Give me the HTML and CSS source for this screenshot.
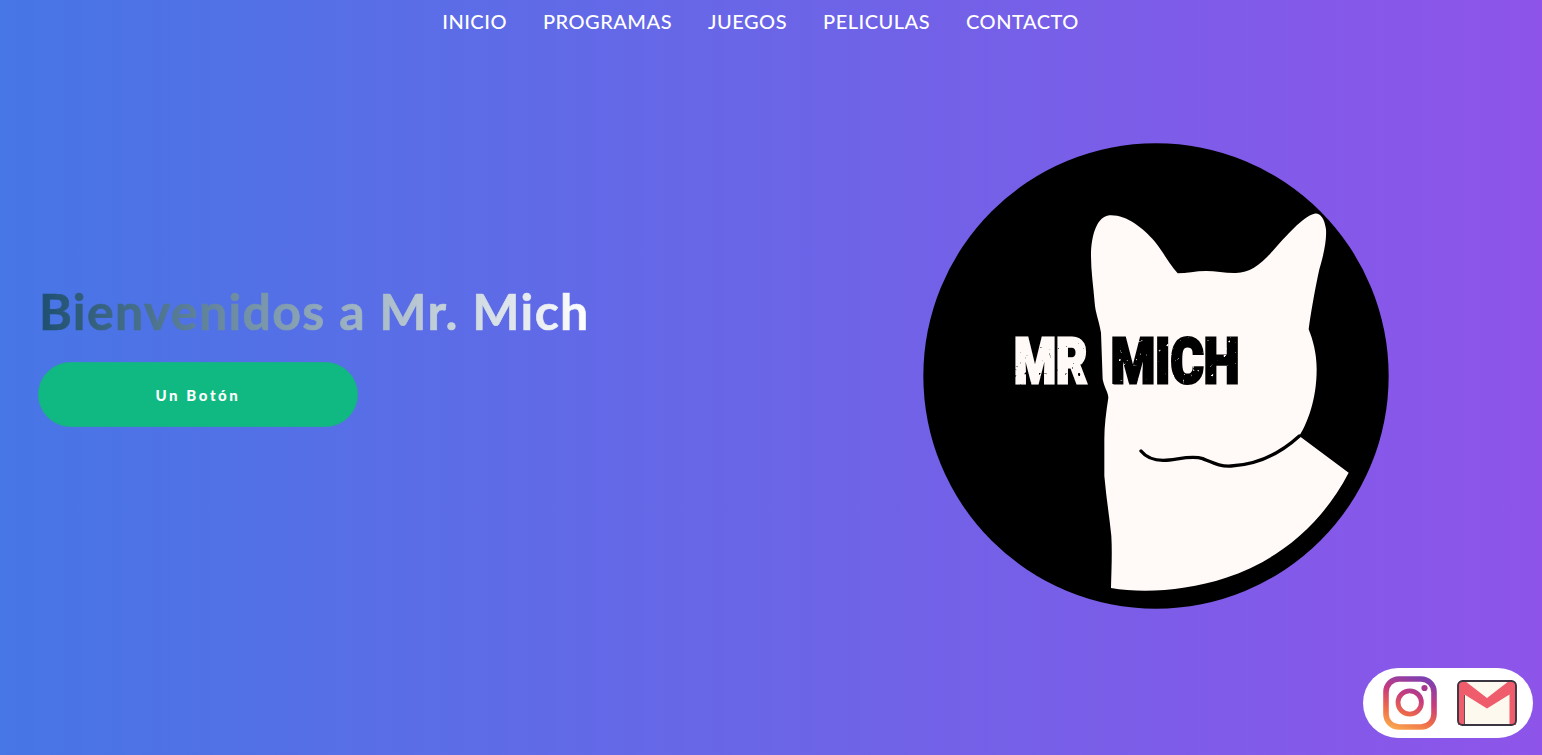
FILE: index.html
```html
<!DOCTYPE html>
<html lang="es">
<head>
<meta charset="utf-8">
<title>Mr. Mich</title>
<link rel="stylesheet" href="styles.css">
</head>
<body>
<nav class="nav">
  <a href="#">INICIO</a>
  <a href="#">PROGRAMAS</a>
  <a href="#">JUEGOS</a>
  <a href="#">PELICULAS</a>
  <a href="#">CONTACTO</a>
</nav>
<main class="hero">
  <div class="intro">
    <h1 class="title">Bienvenidos a Mr. Mich</h1>
    <a class="cta" href="#">Un Botón</a>
  </div>
  <svg class="logo" viewBox="41 41 1398 1398" aria-label="Mr Mich">
    <defs>
      <filter id="soft" x="-2%" y="-2%" width="104%" height="104%">
        <feGaussianBlur stdDeviation="1.8"/>
      </filter>
      <filter id="rough" x="-5%" y="-5%" width="110%" height="110%">
        <feTurbulence type="fractalNoise" baseFrequency="0.07" numOctaves="2" seed="4" result="n"/>
        <feColorMatrix in="n" type="matrix" values="0 0 0 0 0  0 0 0 0 0  0 0 0 0 0  12 0 0 0 -2.200" result="m"/>
        <feComposite in="SourceGraphic" in2="m" operator="in"/>
      </filter>
    </defs>
    <g filter="url(#soft)">
      <circle cx="740" cy="740" r="698" fill="#000"/>
      <path fill="#FFF9F7" d="M600 258C565 262 548 310 545 370C544 420 552 470 556 520C558 550 568 570 575 610L580 750C585 775 597 790 597 805C590 850 585 890 585 930L585 1040C590 1100 600 1160 606 1220C609 1270 606 1330 605 1376C700 1392 830 1385 950 1345C1090 1300 1230 1200 1318 1030L1170 920C1195 880 1222 810 1222 720C1222 670 1210 630 1198 600C1205 550 1215 490 1230 420C1245 370 1252 330 1250 300C1245 265 1232 250 1215 253C1180 262 1130 320 1090 365C1050 410 1020 430 980 431C950 432 920 425 890 425C860 425 830 432 805 432C780 405 760 365 735 335C700 295 650 255 600 258Z"/>
      <path fill="none" stroke="#000" stroke-width="10" stroke-linecap="round" d="M695 965C715 990 745 996 780 992C815 988 850 978 880 988C915 1002 935 1012 965 1010C1040 1006 1110 975 1170 920"/>
      <g filter="url(#rough)">
        <text class="logo-text" x="314" y="762" fill="#FFF9F7" stroke="#FFF9F7" textLength="220" lengthAdjust="spacingAndGlyphs">MR</text>
        <text class="logo-text" x="604" y="762" fill="#000" stroke="#000" textLength="386" lengthAdjust="spacingAndGlyphs">MICH</text>
      </g>
    </g>
  </svg>
</main>
<aside class="social">
  <svg class="ig" viewBox="0 0 54 54" aria-label="Instagram">
    <defs>
      <linearGradient id="igg" gradientUnits="userSpaceOnUse" x1="14" y1="54" x2="34" y2="0">
        <stop offset="0" stop-color="#F9A84F"/>
        <stop offset="0.3" stop-color="#EE6A48"/>
        <stop offset="0.62" stop-color="#C73B7E"/>
        <stop offset="1" stop-color="#7F3FB0"/>
      </linearGradient>
    </defs>
    <rect x="3" y="3" width="48" height="48" rx="13" fill="#fff" stroke="url(#igg)" stroke-width="5.600"/>
    <circle cx="26.700" cy="26.500" r="11.700" fill="#fff" stroke="url(#igg)" stroke-width="4.800"/>
    <circle cx="41.500" cy="12" r="3.100" fill="#A8388F"/>
  </svg>
  <svg class="gm" viewBox="0 0 60 46" aria-label="Correo">
    <rect x="1" y="1" width="58" height="44" rx="4.500" fill="#FEF9EE"/>
    <path fill="#EF5D6C" d="M1 5Q1 1 5 1H8L30 18L52 1H55Q59 1 59 5V45H52.500V14.500L30 28.500L7.500 14.500V45H1Z"/>
    <path fill="none" stroke="#3A3540" stroke-width="0.800" d="M7.500 15V44"/>
    <rect x="1" y="1" width="58" height="44" rx="4.500" fill="none" stroke="#3A3540" stroke-width="1.900"/>
  </svg>
</aside>
</body>
</html>
```
FILE: styles.css
```css
* { box-sizing: border-box; }
html, body { margin: 0; height: 100%; }
body {
  height: 755px;
  overflow: hidden;
  background: linear-gradient(to right, #4776E6, #8E54E9);
  font-family: "Lato", "Liberation Sans", sans-serif;
  color: #fff;
}
.nav {
  height: 44px;
  padding: 0 21px 2px 0;
  display: flex;
  justify-content: center;
  align-items: center;
  gap: 36px;
}
.nav a {
  color: #fff;
  text-decoration: none;
  font-size: 20px;
  font-weight: 500;
  letter-spacing: 0.5px;
  line-height: 42px;
}
.hero {
  height: 664px;
  padding: 0 153px 0 38px;
  display: flex;
  justify-content: space-between;
  align-items: center;
}
.intro {
  display: flex;
  flex-direction: column;
  align-items: flex-start;
  margin-bottom: 44px;
}
.title {
  margin: 0 0 21px 1px;
  font-size: 50px;
  line-height: 60px;
  font-weight: 700;
  letter-spacing: 1.35px;
  -webkit-text-stroke: 0.7px transparent;
  background: linear-gradient(to right, #1E4F70, #FFFFFF);
  -webkit-background-clip: text;
  background-clip: text;
  color: transparent;
}
.cta {
  width: 320px;
  height: 65px;
  display: flex;
  align-items: center;
  justify-content: center;
  border: 1px solid #1CAE8A;
  border-radius: 33px;
  background: #10B981;
  color: #fff;
  font-size: 15px;
  font-weight: 900;
  letter-spacing: 2.6px;
  text-decoration: none;
}
.logo { width: 466px; height: 466px; display: block; }
.logo-text {
  font-family: "Roboto", "Liberation Sans", sans-serif;
  font-weight: 900;
  font-size: 190px;
  stroke-width: 9px;
}
.social {
  position: fixed;
  left: 1363px;
  top: 668px;
  width: 170px;
  height: 70px;
  border-radius: 35px;
  background: #fff;
  display: flex;
  align-items: center;
  padding-left: 20px;
  gap: 20px;
}
.ig { width: 54px; height: 54px; display: block; }
.gm { width: 60px; height: 46px; display: block; }
```
